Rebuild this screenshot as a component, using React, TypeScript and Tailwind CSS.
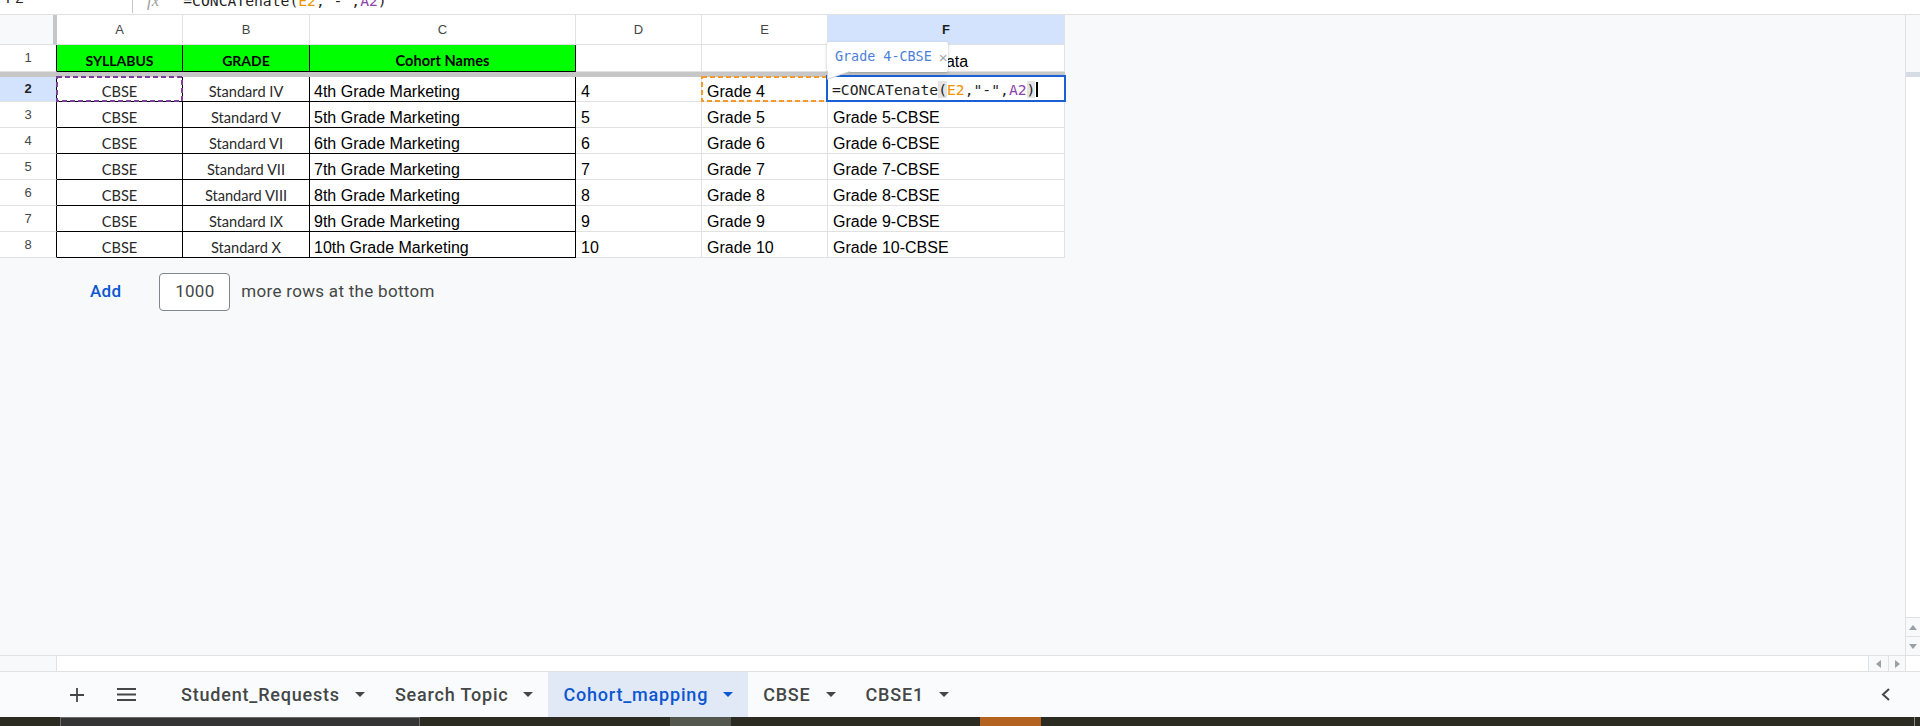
import React from "react";

const mono = "font-['DejaVu_Sans_Mono',monospace]";
const arial = "font-['Liberation_Sans',Arial,sans-serif]";
const calibri = "font-['Lato','Liberation_Sans',sans-serif]";

const rows = [
  { n: 3, std: "Standard V", name: "5th Grade Marketing", d: "5" },
  { n: 4, std: "Standard VI", name: "6th Grade Marketing", d: "6" },
  { n: 5, std: "Standard VII", name: "7th Grade Marketing", d: "7" },
  { n: 6, std: "Standard VIII", name: "8th Grade Marketing", d: "8" },
  { n: 7, std: "Standard IX", name: "9th Grade Marketing", d: "9" },
  { n: 8, std: "Standard X", name: "10th Grade Marketing", d: "10" },
];

const Caret = ({ color = "#444746" }: { color?: string }) => (
  <svg width="10" height="5" viewBox="0 0 10 5">
    <path d="M0 0h10L5 5z" fill={color} />
  </svg>
);

const Tab = ({ label, active = false }: { label: string; active?: boolean }) => (
  <div
    className={`flex h-full items-center gap-[15px] px-[15px] ${
      active ? "bg-[#e1e9f7] text-[#0b57d0]" : "text-[#444746]"
    }`}
  >
    <span>{label}</span>
    <Caret color={active ? "#0b57d0" : "#444746"} />
  </div>
);

// dashed range outline drawn over a cell
const DashBox = ({ color }: { color: string }) => (
  <svg className="pointer-events-none absolute -left-px -top-px h-[26px] w-[127px]" viewBox="0 0 127 26">
    <rect x="1" y="1" width="125" height="24" fill="none" stroke={color} strokeWidth="2" strokeDasharray="5 3" />
  </svg>
);

export default function App() {
  return (
    <div className={`flex h-[726px] w-[1920px] flex-col overflow-hidden bg-white ${arial}`}>
      {/* formula bar, mostly scrolled out of view */}
      <div className="h-[15px] shrink-0 overflow-hidden border-b border-[#e1e1e1] bg-white">
        <div className="-mt-[12px] flex h-[26px] items-center">
          <div className="-mt-[3px] flex h-full w-[133px] items-start border-r border-[#c4c7c5] pl-[6px] text-[15px] text-[#1f1f1f]">F2</div>
          <span className="ml-[14px] font-['Liberation_Serif',serif] text-[17px] italic text-[#a0a0a0]">fx</span>
          <div className={`ml-[24px] text-[14.7px] text-[#1f1f1f] ${mono}`}>
            =CONCATenate(<span className="text-[#f09300]">E2</span>,"-",<span className="text-[#8e44ad]">A2</span>)
          </div>
        </div>
      </div>

      {/* grid + vertical scrollbar */}
      <div className="flex h-[640px] shrink-0">
        <div className="flex flex-1 flex-col bg-[#f8f9fa]">
          <div className="flex w-[1065px] flex-col bg-white">
            {/* column letters */}
            <div className="flex h-[30px] text-[13px] text-[#444746]">
              <div className="w-[57px] border-b border-r-4 border-b-[#e1e1e1] border-r-[#c4c7c5] bg-[#f8f9fa]" />
              <div className="flex w-[126px] items-center justify-center border-b border-r border-[#e1e1e1]">A</div>
              <div className="flex w-[127px] items-center justify-center border-b border-r border-[#e1e1e1]">B</div>
              <div className="flex w-[266px] items-center justify-center border-b border-r border-[#e1e1e1]">C</div>
              <div className="flex w-[126px] items-center justify-center border-b border-r border-[#e1e1e1]">D</div>
              <div className="flex w-[126px] items-center justify-center border-b border-r border-[#e1e1e1]">E</div>
              <div className="flex w-[237px] items-center justify-center border-b border-r border-[#e1e1e1] bg-[#d3e3fd] font-bold text-[#1f1f1f]">F</div>
            </div>

            {/* row 1 (frozen) */}
            <div className="flex h-[27px]">
              <div className="flex w-[57px] items-center justify-center border-b border-r border-b-[#e1e1e1] border-r-black text-[13px] text-[#444746]">1</div>
              <div className={`flex w-[126px] items-end justify-center border-b border-r border-black bg-[#00ff00] pb-[2px] text-[14px] font-bold leading-4 ${calibri}`}>SYLLABUS</div>
              <div className={`flex w-[127px] items-end justify-center border-b border-r border-black bg-[#00ff00] pb-[2px] text-[14px] font-bold leading-4 ${calibri}`}>GRADE</div>
              <div className={`flex w-[266px] items-end justify-center border-b border-r border-black bg-[#00ff00] pb-[2px] text-[14.6px] font-bold leading-4 ${calibri}`}>Cohort Names</div>
              <div className="w-[126px] border-b border-r border-[#e1e1e1]" />
              <div className="w-[126px] border-b border-r border-[#e1e1e1]" />
              <div className="flex w-[237px] items-end whitespace-nowrap border-b border-r border-[#e1e1e1] pb-[1px] pl-[5px] text-[16px] leading-4 text-black">Grade Cohort Data</div>
            </div>
            <div className="h-[5px] bg-[#c7c7c7]" />

            {/* row 2 (active) */}
            <div className="flex h-[25px] text-[16px] leading-4 text-black">
              <div className="flex w-[57px] items-center justify-center border-b border-r border-b-[#e1e1e1] border-r-black bg-[#d3e3fd] text-[13px] font-bold text-[#1f1f1f]">2</div>
              <div className={`relative flex w-[126px] items-end justify-center border-b border-r border-black pb-[1px] text-[14.6px] text-[#2a2a2a] ${calibri}`}>
                CBSE
                <DashBox color="#7e3f98" />
              </div>
              <div className={`flex w-[127px] items-end justify-center border-b border-r border-black pb-[1px] text-[14.6px] text-[#2a2a2a] ${calibri}`}>Standard IV</div>
              <div className="flex w-[266px] items-end border-b border-r border-black pb-[1px] pl-1">4th Grade Marketing</div>
              <div className="flex w-[126px] items-end border-b border-r border-[#e1e1e1] pb-[1px] pl-[5px]">4</div>
              <div className="relative flex w-[126px] items-end border-b border-r border-[#e1e1e1] pb-[1px] pl-[5px]">
                Grade 4
                <DashBox color="#f29a2e" />
              </div>
              <div className="relative w-[237px] border-b border-r border-[#e1e1e1]">
                <div className="absolute -bottom-px -left-[2px] -right-[2px] -top-[2px] z-10 flex items-center border-2 border-[#1a5fd6] bg-white pl-[4px] pt-[1px]">
                  <span className={`flex items-center whitespace-nowrap text-[14.7px] leading-[17px] text-[#1f1f1f] ${mono}`}>
                    =CONCATenate<span className="bg-[#e4e4e4]">(</span>
                    <span className="text-[#f09300]">E2</span>,"-",<span className="text-[#8e44ad]">A2</span>
                    <span className="bg-[#e4e4e4]">)</span>
                    <span className="ml-px h-[15px] w-[2px] bg-black" />
                  </span>
                </div>
                {/* value preview tooltip */}
                <div className="absolute -left-px -top-[35px] z-20 flex h-[30px] w-[121px] items-center gap-[7px] whitespace-nowrap rounded-[2px] bg-white pl-[8px] shadow-[0_1px_3px_rgba(60,64,67,0.35)]">
                  <span className={`text-[13.4px] text-[#4a7fd9] ${mono}`}>Grade 4-CBSE</span>
                  <span className="text-[15px] leading-none text-[#a0a4a8]">×</span>
                  <svg className="absolute -bottom-[8px] left-0" width="24" height="9" viewBox="0 0 24 9">
                    <path d="M0 0h24L0 8.5z" fill="#fff" />
                    <path d="M0.5 0v8L23 0.5" fill="none" stroke="#d0d0d0" strokeWidth="1" />
                  </svg>
                </div>
              </div>
            </div>

            {rows.map((r) => (
              <div key={r.n} className="flex h-[26px] text-[16px] leading-4 text-black">
                <div className="flex w-[57px] items-center justify-center border-b border-r border-b-[#e1e1e1] border-r-black text-[13px] text-[#444746]">{r.n}</div>
                <div className={`flex w-[126px] items-end justify-center border-b border-r border-black pb-[1px] text-[14.6px] text-[#2a2a2a] ${calibri}`}>CBSE</div>
                <div className={`flex w-[127px] items-end justify-center border-b border-r border-black pb-[1px] text-[14.6px] text-[#2a2a2a] ${calibri}`}>{r.std}</div>
                <div className="flex w-[266px] items-end border-b border-r border-black pb-[1px] pl-1">{r.name}</div>
                <div className="flex w-[126px] items-end border-b border-r border-[#e1e1e1] pb-[1px] pl-[5px]">{r.d}</div>
                <div className="flex w-[126px] items-end border-b border-r border-[#e1e1e1] pb-[1px] pl-[5px]">Grade {r.d}</div>
                <div className="flex w-[237px] items-end border-b border-r border-[#e1e1e1] pb-[1px] pl-[5px]">Grade {r.d}-CBSE</div>
              </div>
            ))}
          </div>

          {/* add rows */}
          <div className="mt-[15px] flex items-center pl-[90px] font-['Roboto',sans-serif] text-[17px] tracking-[0.3px]">
            <span className="font-medium text-[#0b57d0]">Add</span>
            <div className="ml-[38px] flex h-[38px] w-[71px] items-center justify-center rounded-[4px] border border-[#80868b] bg-white text-[#444746]">1000</div>
            <span className="ml-[11px] text-[#444746]">more rows at the bottom</span>
          </div>
        </div>

        {/* vertical scrollbar */}
        <div className="flex w-[15px] flex-col border-l border-[#e1e1e1]">
          <div className="h-[57px] bg-[#f8f9fa]" />
          <div className="h-[5px] bg-[#d6dce6]" />
          <div className="flex-1 bg-white" />
          <div className="flex h-[19px] items-center justify-center border-t border-[#e1e1e1] bg-[#f8f9fa]">
            <svg width="8" height="5" viewBox="0 0 8 5"><path d="M0 5h8L4 0z" fill="#9aa0a6" /></svg>
          </div>
          <div className="flex h-[19px] items-center justify-center border-t border-[#e1e1e1] bg-[#f8f9fa]">
            <svg width="8" height="5" viewBox="0 0 8 5"><path d="M0 0h8L4 5z" fill="#9aa0a6" /></svg>
          </div>
        </div>
      </div>

      {/* horizontal scrollbar */}
      <div className="flex h-[16px] shrink-0 border-t border-[#e1e1e1]">
        <div className="w-[57px] border-r border-[#e1e1e1] bg-[#f8f9fa]" />
        <div className="flex-1 bg-white" />
        <div className="flex w-[20px] items-center justify-center border-l border-[#e1e1e1] bg-[#f8f9fa]">
          <svg width="5" height="8" viewBox="0 0 5 8"><path d="M5 0v8L0 4z" fill="#9aa0a6" /></svg>
        </div>
        <div className="flex w-[17px] items-center justify-center border-l border-[#e1e1e1] bg-[#f8f9fa]">
          <svg width="5" height="8" viewBox="0 0 5 8"><path d="M0 0v8L5 4z" fill="#9aa0a6" /></svg>
        </div>
        <div className="w-[15px] border-l border-[#e1e1e1] bg-white" />
      </div>

      {/* sheet tabs */}
      <div className="flex h-[46px] shrink-0 items-stretch border-t border-[#e1e1e1] bg-[#f9fbfd] font-['Roboto',sans-serif] text-[18px] font-medium tracking-[0.8px]">
        <div className="ml-[70px] flex items-center">
          <svg width="14" height="14" viewBox="0 0 14 14">
            <path d="M7 0v14M0 7h14" stroke="#444746" strokeWidth="1.8" />
          </svg>
        </div>
        <div className="ml-[33px] flex items-center">
          <svg width="19" height="13" viewBox="0 0 19 13">
            <path d="M0 1h19M0 6.5h19M0 12h19" stroke="#444746" strokeWidth="2" />
          </svg>
        </div>
        <div className="ml-[30px] flex">
          <Tab label="Student_Requests" />
          <Tab label="Search Topic" />
          <Tab label="Cohort_mapping" active />
          <Tab label="CBSE" />
          <Tab label="CBSE1" />
        </div>
        <div className="ml-auto mr-[30px] flex items-center">
          <svg width="9" height="13" viewBox="0 0 9 13">
            <path d="M8 1L2 6.5 8 12" fill="none" stroke="#444746" strokeWidth="2" />
          </svg>
        </div>
      </div>

      {/* desktop taskbar strip */}
      <div className="flex h-[9px] shrink-0 bg-[#2b2b22]">
        <div className="ml-[60px] w-[360px] border-x border-t border-[#6b6b6b] bg-[#343434]" />
        <div className="ml-[250px] w-[61px] bg-[#54574e]" />
        <div className="ml-[249px] w-[61px] bg-[#b4621f]" />
        <div className="ml-auto mr-[5px] w-px bg-[#8a8a8a]" />
      </div>
    </div>
  );
}
